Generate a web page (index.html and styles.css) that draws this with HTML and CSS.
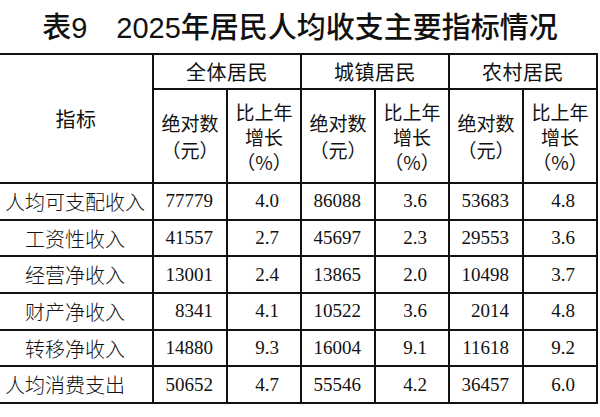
FILE: index.html
```html
<!DOCTYPE html>
<html lang="zh-CN">
<head>
<meta charset="utf-8">
<title>表9 2025年居民人均收支主要指标情况</title>
<link rel="stylesheet" href="styles.css">
</head>
<body>
<h1 class="title"><span class="title-no">表9</span>2025年居民人均收支主要指标情况</h1>
<table class="stats">
  <colgroup>
    <col class="c-label">
    <col class="c-abs">
    <col class="c-pct">
    <col class="c-abs">
    <col class="c-pct">
    <col class="c-abs">
    <col class="c-pct">
  </colgroup>
  <thead>
    <tr class="group-row">
      <th rowspan="2" class="h-label">指标</th>
      <th colspan="2">全体居民</th>
      <th colspan="2">城镇居民</th>
      <th colspan="2" class="last">农村居民</th>
    </tr>
    <tr class="sub-row">
      <th class="h-abs">绝对数<br>（元）</th>
      <th class="h-pct">比上年<br>增长<br>（%）</th>
      <th class="h-abs">绝对数<br>（元）</th>
      <th class="h-pct">比上年<br>增长<br>（%）</th>
      <th class="h-abs">绝对数<br>（元）</th>
      <th class="h-pct last">比上年<br>增长<br>（%）</th>
    </tr>
  </thead>
  <tbody>
    <tr>
      <td class="label">人均可支配收入</td>
      <td class="abs">77779</td><td class="pct">4.0</td>
      <td class="abs">86088</td><td class="pct">3.6</td>
      <td class="abs">53683</td><td class="pct last">4.8</td>
    </tr>
    <tr>
      <td class="label sub">工资性收入</td>
      <td class="abs">41557</td><td class="pct">2.7</td>
      <td class="abs">45697</td><td class="pct">2.3</td>
      <td class="abs">29553</td><td class="pct last">3.6</td>
    </tr>
    <tr>
      <td class="label sub">经营净收入</td>
      <td class="abs">13001</td><td class="pct">2.4</td>
      <td class="abs">13865</td><td class="pct">2.0</td>
      <td class="abs">10498</td><td class="pct last">3.7</td>
    </tr>
    <tr>
      <td class="label sub">财产净收入</td>
      <td class="abs">8341</td><td class="pct">4.1</td>
      <td class="abs">10522</td><td class="pct">3.6</td>
      <td class="abs">2014</td><td class="pct last">4.8</td>
    </tr>
    <tr>
      <td class="label sub">转移净收入</td>
      <td class="abs">14880</td><td class="pct">9.3</td>
      <td class="abs">16004</td><td class="pct">9.1</td>
      <td class="abs">11618</td><td class="pct last">9.2</td>
    </tr>
    <tr>
      <td class="label">人均消费支出</td>
      <td class="abs">50652</td><td class="pct">4.7</td>
      <td class="abs">55546</td><td class="pct">4.2</td>
      <td class="abs">36457</td><td class="pct last">6.0</td>
    </tr>
  </tbody>
</table>
</body>
</html>
```
FILE: styles.css
```css
html, body {
  margin: 0;
  padding: 0;
  background: #ffffff;
  color: #111111;
}

body {
  width: 600px;
  height: 417px;
  overflow: hidden;
  font-family: "Liberation Sans", "Noto Sans CJK SC", sans-serif;
}

.title {
  margin: 0;
  height: 53px;
  line-height: 56px;
  text-align: center;
  font-size: 29px;
  font-weight: 500;
  letter-spacing: 0;
  color: #111;
}

.title-no {
  margin-right: 29px;
}

.stats {
  width: 598px;
  border-collapse: collapse;
  table-layout: fixed;
  border-top: 2px solid #111;
  border-bottom: 2px solid #111;
}

.c-label { width: 153px; }
.c-abs { width: 74px; }
.c-pct { width: 74px; }

.stats th,
.stats td {
  border: 2px solid #111;
  padding: 0;
}

.stats th:first-child,
.stats td:first-child {
  border-left: none;
}

.stats th {
  font-family: "Noto Sans CJK SC", sans-serif;
  font-weight: 400;
  font-size: 19px;
  text-align: center;
  vertical-align: middle;
}

.group-row th {
  height: 33px;
  font-size: 20px;
  letter-spacing: 0.5px;
}

.sub-row th {
  height: 92px;
}

.h-abs {
  line-height: 27px;
}

.h-pct {
  line-height: 25px;
}

.h-label {
  font-size: 19px;
}

.stats td {
  height: 34.7px;
  vertical-align: middle;
}

.label {
  font-family: "Noto Sans CJK SC", sans-serif;
  font-weight: 300;
  font-size: 20px;
  text-align: left;
  padding-left: 5px !important;
  white-space: nowrap;
}

.label.sub {
  padding-left: 25px !important;
}

.abs,
.pct {
  font-family: "Liberation Serif", serif;
  font-size: 19px;
  text-align: right;
}

.abs {
  padding-right: 13px !important;
}

.pct {
  padding-right: 21px !important;
}
```
